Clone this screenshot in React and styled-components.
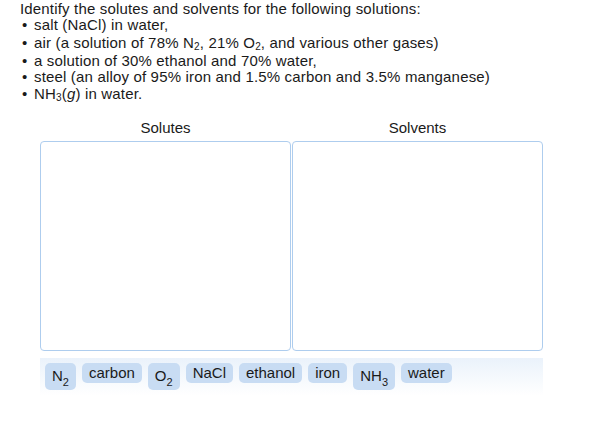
import React from "react";
import styled, { createGlobalStyle } from "styled-components";

const Global = createGlobalStyle`
  html, body { margin: 0; padding: 0; background: #fff; }
  body { font-family: "Liberation Sans", Arial, sans-serif; font-size: 15px; color: #1a1a1a; }
`;

const Page = styled.div`
  padding: 0 0 0 20px;
  width: 580px;
`;

const Prompt = styled.div`
  padding-top: 1px;
  line-height: 16px;
  letter-spacing: 0.17px;
`;

const List = styled.ul`
  list-style: none;
  margin: 0;
  padding: 0;
  letter-spacing: 0.17px;
`;

const Item = styled.li`
  display: flex;
  line-height: 16px;
  margin-top: ${(p) => p.$gap || 0}px;
  &::before {
    content: "•";
    width: 12px;
    padding-left: 2px;
  }
`;

const Sub = styled.sub`
  font-size: 10px;
  line-height: 0;
  vertical-align: -2px;
`;

const Board = styled.div`
  margin: 18px 0 0 20px;
  width: 503px;
  letter-spacing: 0;
`;

const Columns = styled.div`
  display: grid;
  grid-template-columns: 251px 251px;
  column-gap: 1px;
`;

const Column = styled.div`
  display: flex;
  flex-direction: column;
`;

const Heading = styled.div`
  text-align: center;
  line-height: 16px;
  height: 21px;
`;

const Zone = styled.div`
  height: 208px;
  border: 1px solid #aecdee;
  border-radius: 4px;
  background: #fff;
`;

const Tray = styled.div`
  margin-top: 7px;
  display: flex;
  align-items: flex-start;
  gap: 6px;
  padding: 5px 5px 6px 5px;
  min-height: 20px;
  background: linear-gradient(to bottom, #eaf2fb 0%, #f7fafd 60%, #ffffff 100%);
`;

const Chip = styled.div`
  background: #c8dcf3;
  border-radius: 5px;
  padding: ${(p) => (p.$tall ? "5px 7px 5px" : "2px 7px 2px")};
  line-height: 16px;
  white-space: nowrap;
`;

const ChipSub = styled.span`
  font-size: 11px;
  position: relative;
  top: 5px;
`;

const chips = [
  { label: "N", sub: "2" },
  { label: "carbon" },
  { label: "O", sub: "2" },
  { label: "NaCl" },
  { label: "ethanol" },
  { label: "iron" },
  { label: "NH", sub: "3" },
  { label: "water" },
];

export default function App() {
  return (
    <Page>
      <Global />
      <Prompt>Identify the solutes and solvents for the following solutions:</Prompt>
      <List>
        <Item>salt (NaCl) in water,</Item>
        <Item $gap={2}>
          <span>
            air (a solution of 78% N<Sub>2</Sub>, 21% O<Sub>2</Sub>, and various other gases)
          </span>
        </Item>
        <Item $gap={2}>a solution of 30% ethanol and 70% water,</Item>
        <Item>steel (an alloy of 95% iron and 1.5% carbon and 3.5% manganese)</Item>
        <Item $gap={1}>
          <span>
            NH<Sub>3</Sub>(<i>g</i>) in water.
          </span>
        </Item>
      </List>
      <Board>
        <Columns>
          <Column>
            <Heading>Solutes</Heading>
            <Zone />
          </Column>
          <Column>
            <Heading>Solvents</Heading>
            <Zone />
          </Column>
        </Columns>
        <Tray>
          {chips.map((c) => (
            <Chip key={c.label} $tall={!!c.sub}>
              {c.label}
              {c.sub && <ChipSub>{c.sub}</ChipSub>}
            </Chip>
          ))}
        </Tray>
      </Board>
    </Page>
  );
}
